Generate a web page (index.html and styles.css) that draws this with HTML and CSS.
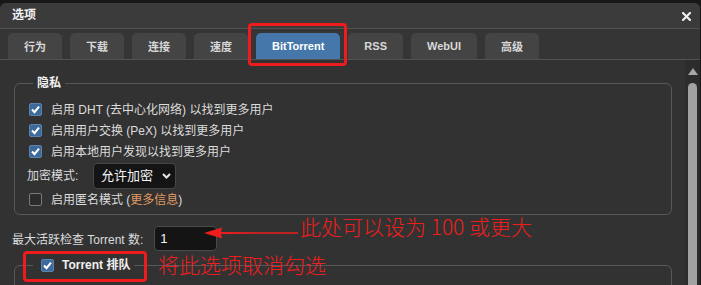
FILE: index.html
```html
<!DOCTYPE html>
<html lang="zh-CN">
<head>
<meta charset="utf-8">
<title>选项</title>
<link rel="stylesheet" href="styles.css">
</head>
<body>
<div class="window">
  <div class="titlebar">
    <span class="title">选项</span>
    <svg class="close" width="9" height="9" viewBox="0 0 9 9"><path d="M1 1 L8 8 M8 1 L1 8" stroke="#eeeeee" stroke-width="2.2" stroke-linecap="square"/></svg>
  </div>
  <div class="tabs">
    <div class="tab">行为</div>
    <div class="tab">下载</div>
    <div class="tab">连接</div>
    <div class="tab">速度</div>
    <div class="tab active">BitTorrent</div>
    <div class="tab">RSS</div>
    <div class="tab">WebUI</div>
    <div class="tab">高级</div>
  </div>
  <div class="main">
    <div class="content">
      <fieldset class="group privacy">
        <legend>隐私</legend>
        <div class="row"><span class="cb checked"><svg viewBox="0 0 13 13"><path d="M3 6.6 L5.5 9.1 L10 3.6" fill="none" stroke="#fff" stroke-width="2.1"/></svg></span><span>启用 DHT (去中心化网络) 以找到更多用户</span></div>
        <div class="row"><span class="cb checked"><svg viewBox="0 0 13 13"><path d="M3 6.6 L5.5 9.1 L10 3.6" fill="none" stroke="#fff" stroke-width="2.1"/></svg></span><span>启用用户交换 (PeX) 以找到更多用户</span></div>
        <div class="row"><span class="cb checked"><svg viewBox="0 0 13 13"><path d="M3 6.6 L5.5 9.1 L10 3.6" fill="none" stroke="#fff" stroke-width="2.1"/></svg></span><span>启用本地用户发现以找到更多用户</span></div>
        <div class="row select-row"><span class="lbl">加密模式:</span><div class="select"><span>允许加密</span><svg width="9" height="6" viewBox="0 0 9 6"><path d="M1 1 L4.5 4.5 L8 1" fill="none" stroke="#e6e6e6" stroke-width="2"/></svg></div></div>
        <div class="row"><span class="cb"></span><span>启用匿名模式 (<span class="link">更多信息</span>)</span></div>
      </fieldset>
      <div class="max-row"><span>最大活跃检查 Torrent 数:</span><div class="input">1</div></div>
      <fieldset class="group queue">
        <legend><span class="cb checked"><svg viewBox="0 0 13 13"><path d="M3 6.6 L5.5 9.1 L10 3.6" fill="none" stroke="#fff" stroke-width="2.1"/></svg></span><span>Torrent 排队</span></legend>
      </fieldset>
    </div>
    <div class="scrollbar">
      <svg class="up" width="10" height="7" viewBox="0 0 10 7"><path d="M5 0 L10 7 L0 7 Z" fill="#a6a6a6"/></svg>
      <div class="thumb"></div>
    </div>
  </div>
</div>

<div class="mark mark-tab"></div>
<div class="mark mark-queue"></div>
<svg class="arrow" width="96" height="14" viewBox="0 0 96 14"><path d="M0 7 L18 1.5 L17 6 L94 6.3 L94 7.7 L17 8 L18 12.5 Z" fill="#f01d1d"/></svg>
<div class="note note-max">此处可以设为 100 或更大</div>
<div class="note note-queue">将此选项取消勾选</div>
</body>
</html>
```

FILE: styles.css
```css
html, body {
  margin: 0;
  padding: 0;
}
body {
  background: #181818;
  width: 701px;
  height: 285px;
  overflow: hidden;
  position: relative;
  font-family: "Liberation Sans", "Noto Sans CJK SC", sans-serif;
  font-size: 12px;
  color: #dcdcdc;
}
.window {
  margin-top: 3px;
  width: 700px;
  height: 282px;
  background: #323232;
  border-radius: 6px 6px 0 0;
  display: flex;
  flex-direction: column;
  overflow: hidden;
}
.titlebar {
  height: 25px;
  background: #3b3b3b;
  border-bottom: 1px solid #525252;
  display: flex;
  align-items: center;
  justify-content: space-between;
  padding: 0 9px 0 12px;
  flex: none;
}
.title {
  font-weight: bold;
  color: #f2f2f2;
  font-size: 12px;
  line-height: 16px;
  margin-top: -1px;
}
.close {
  display: block;
  margin-top: 1px;
}
.tabs {
  flex: none;
  height: 26px;
  padding: 4px 0 0 8px;
  background: #353535;
  border-bottom: 1px solid #525252;
  display: flex;
  gap: 8px;
}
.tab {
  height: 26px;
  padding: 0 16px;
  background: #444444;
  border-radius: 5px 5px 0 0;
  font-size: 11px;
  font-weight: bold;
  color: #d8d8d8;
  display: flex;
  align-items: center;
  justify-content: center;
  min-width: 22px;
}
.tab.active {
  background: #4677ab;
  color: #ffffff;
}
.main {
  flex: 1;
  display: flex;
  min-height: 0;
}
.content {
  flex: 1;
  padding-top: 14px;
  min-width: 0;
}
.group {
  margin: 0 13px 0 14px;
  border: 1px solid #585858;
  border-radius: 6px;
  min-width: 0;
}
.group legend {
  padding: 0 4px;
  margin-left: 4px;
  font-weight: bold;
  color: #f0f0f0;
  line-height: 18px;
  height: 18px;
}
.privacy {
  padding: 7px 14px 4px 14px;
}
.row {
  display: flex;
  align-items: center;
  height: 21px;
  line-height: 16px;
}
.cb {
  width: 13px;
  height: 13px;
  box-sizing: border-box;
  border-radius: 2px;
  border: 1px solid #7a7a7a;
  background: #2b2b2b;
  margin-right: 9px;
  flex: none;
  display: block;
}
.cb svg {
  display: block;
  width: 13px;
  height: 13px;
  margin: -1px;
}
.cb.checked {
  background: #3d6a9b;
  border-color: #5a82ae;
}
.select-row {
  height: 26px;
  margin-top: 1px;
}
.lbl {
  margin-left: -2px;
  width: 66px;
}
.select {
  width: 83px;
  height: 26px;
  box-sizing: border-box;
  background: #141414;
  border: 1px solid #474747;
  border-radius: 4px;
  display: flex;
  align-items: center;
  justify-content: space-between;
  padding: 0 4px 0 7px;
  color: #f4f4f4;
  font-size: 13px;
}
.select svg {
  display: block;
}
.link {
  color: #e39a64;
}
.max-row {
  margin: 11px 0 0 12px;
  height: 24px;
  display: flex;
  align-items: center;
}
.input {
  margin-left: 11px;
  width: 63px;
  height: 25px;
  box-sizing: border-box;
  background: #141414;
  border: 1px solid #4a4a4a;
  border-radius: 4px;
  padding-left: 5px;
  display: flex;
  align-items: center;
  color: #f4f4f4;
  font-size: 13px;
}
.queue {
  margin-top: 6px;
  padding: 0 14px 30px 14px;
}
.queue legend {
  display: flex;
  align-items: center;
}
.queue legend .cb {
  margin-left: 4px;
  margin-right: 8px;
}
.scrollbar {
  width: 15px;
  flex: none;
  background: #2c2c2c;
  display: flex;
  flex-direction: column;
  align-items: flex-start;
}
.up {
  display: block;
  margin: 8px 0 0 3px;
}
.thumb {
  margin: 8px 0 0 3px;
  width: 9px;
  flex: 1;
  background: #a2a2a2;
  border-radius: 5px 5px 0 0;
}
.mark {
  position: absolute;
  border: 3px solid #ee1c1c;
  border-radius: 4px;
  box-sizing: border-box;
}
.mark-tab {
  left: 248px;
  top: 23px;
  width: 99px;
  height: 43px;
}
.mark-queue {
  left: 23px;
  top: 251px;
  width: 124px;
  height: 31px;
}
.arrow {
  position: absolute;
  left: 204px;
  top: 226px;
}
.note {
  position: absolute;
  color: #f01d1d;
  font-family: "Noto Sans CJK SC", sans-serif;
  font-weight: 300;
  font-size: 21px;
  line-height: 21px;
  white-space: nowrap;
}
.note-max {
  left: 300px;
  top: 216px;
}
.note-queue {
  left: 158px;
  top: 254px;
}
```
